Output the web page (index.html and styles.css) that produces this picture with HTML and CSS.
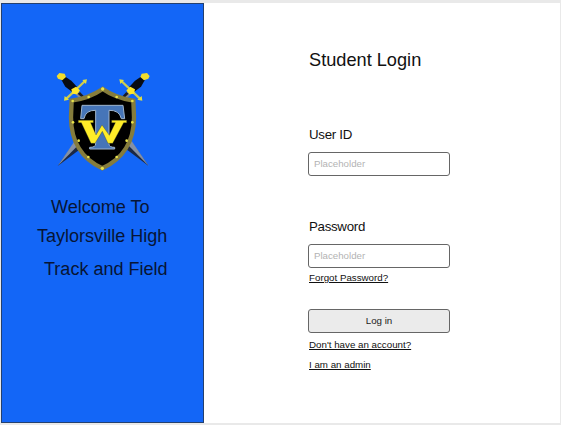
FILE: index.html
```
<!DOCTYPE html>
<html lang="en">
<head>
<meta charset="utf-8">
<title>Student Login</title>
<link rel="stylesheet" href="styles.css">
</head>
<body>
<main class="screen">
  <aside class="welcome">
    <svg class="crest" viewBox="0 0 306 324" width="102" height="108" aria-hidden="true">
      <defs>
        <g id="sword">
          <path d="M70 223L86 245L17 297Z" fill="#1b2844"/>
          <path d="M68 222L79 234L17 297Z" fill="#8590a4"/>
          <path d="M76 68L98 90L88 98L66 78Z" fill="#85898c"/>
          <path d="M84 75L98 90L92 94L77 80Z" fill="#161b29"/>
          <path d="M28 38L38 28L58 41L81 66L66 79L40 59Z" fill="#080b13"/>
          <path d="M14 27L22 18L38 20L42 30L31 40L18 35Z" fill="#f2dd2c"/>
          <path d="M41 97L99 42" stroke="#cdcc50" stroke-width="7"/>
          <path d="M58 67L72 59L84 70L75 82L61 80Z" fill="#ffe72a"/>
          <path d="M91 39L105 37L102 51ZM38 87L51 98L36 101Z" fill="#e3df3d"/>
        </g>
      </defs>
      <use href="#sword"/>
      <use href="#sword" transform="translate(307 0) scale(-1 1)"/>
      <path d="M152 66Q111 94 59 101L57 151C57 222 89 276 151 304C213 276 246 222 246 151L244 101Q191 93 152 66Z" fill="#000" stroke="#857c3c" stroke-width="13"/>
      <g fill="#e9e34a"><circle cx="152" cy="66" r="5"/><circle cx="62" cy="102" r="4"/><circle cx="241" cy="102" r="4"/><circle cx="110" cy="90" r="4"/><circle cx="194" cy="90" r="4"/><circle cx="63" cy="166" r="4"/><circle cx="241" cy="166" r="4"/><circle cx="80" cy="221" r="4"/><circle cx="224" cy="221" r="4"/><circle cx="109" cy="270" r="4"/><circle cx="194" cy="270" r="4"/><circle cx="151" cy="304" r="5"/></g>
      <path d="M90 115H213L218 155H208Q202 129 171 130V231Q171 241 188 241V246H113V241Q131 241 131 231V130Q101 129 96 155H86Z" fill="#4675b8" stroke="#9fb5ce" stroke-width="3"/>
      <path d="M79 160H124V167H116L132 204L150 174L172 205L190 167H179V160H224V167H215L182 229H168L151 193L129 229H117L88 167H79Z" fill="#ffed28" stroke="#38401c" stroke-width="1"/>
    </svg>
    <h1 class="school"><span class="line first">Welcome To</span><span class="line second">Taylorsville High</span><span class="line third">Track and Field</span></h1>
  </aside>
  <form class="login">
    <h2 class="title">Student Login</h2>
    <label class="label" for="user">User ID</label>
    <input class="field" id="user" type="text" placeholder="Placeholder">
    <label class="label password" for="password">Password</label>
    <input class="field" id="password" type="password" placeholder="Placeholder">
    <a class="link forgot" href="#">Forgot Password?</a>
    <button class="submit" type="button">Log in</button>
    <a class="link account" href="#">Don't have an account?</a>
    <a class="link admin" href="#">I am an admin</a>
  </form>
</main>
</body>
</html>
```
FILE: styles.css
```
* { box-sizing: border-box; }
body { margin: 0; background: #fff; font-family: "Liberation Sans", Arial, sans-serif; color: #111; }
.screen { display: flex; width: 561px; height: 425px; border: solid #e9e9e9; border-width: 3px 1px 2px 1px; }
.welcome { width: 203px; height: 420px; background: #1366f7; border: 1px solid #24406f; padding: 63px 0 0 50px; }
.crest { display: block; }
.school { margin: 20px 0 0 -50px; font-size: 18.05px; font-weight: 400; color: #071535; }
.line { display: block; white-space: nowrap; line-height: 24px; }
.first { padding-left: 49px; }
.second { padding-left: 35px; margin-top: 5px; }
.third { padding-left: 42px; margin-top: 9px; }
.login { display: flex; flex-direction: column; align-items: flex-start; padding: 45px 0 0 104px; }
.title { margin: 0 0 0 1px; font-size: 18.2px; line-height: 24px; font-weight: 400; }
.label { margin: 55px 0 0 1px; font-size: 13.3px; line-height: 16px; letter-spacing: -.3px; }
.field { width: 142px; height: 24px; margin-top: 9px; padding: 0 5px 2px; border: 1px solid #666; border-radius: 3px; background: #fff; font: 9.7px "Liberation Sans", Arial, sans-serif; }
.field::placeholder { color: #b3b3b3; opacity: 1; }
.password { margin-top: 43px; }
.link { margin-left: 1px; color: #111; font-size: 9.75px; line-height: 12px; }
.forgot { margin-top: 4px; }
.submit { width: 142px; height: 24px; margin-top: 25px; padding: 0 0 1px; border: 1px solid #666; border-radius: 3px; background: #ebebeb; color: #222; font: 9.75px "Liberation Sans", Arial, sans-serif; }
.account { margin-top: 6px; }
.admin { margin-top: 8px; }
```
